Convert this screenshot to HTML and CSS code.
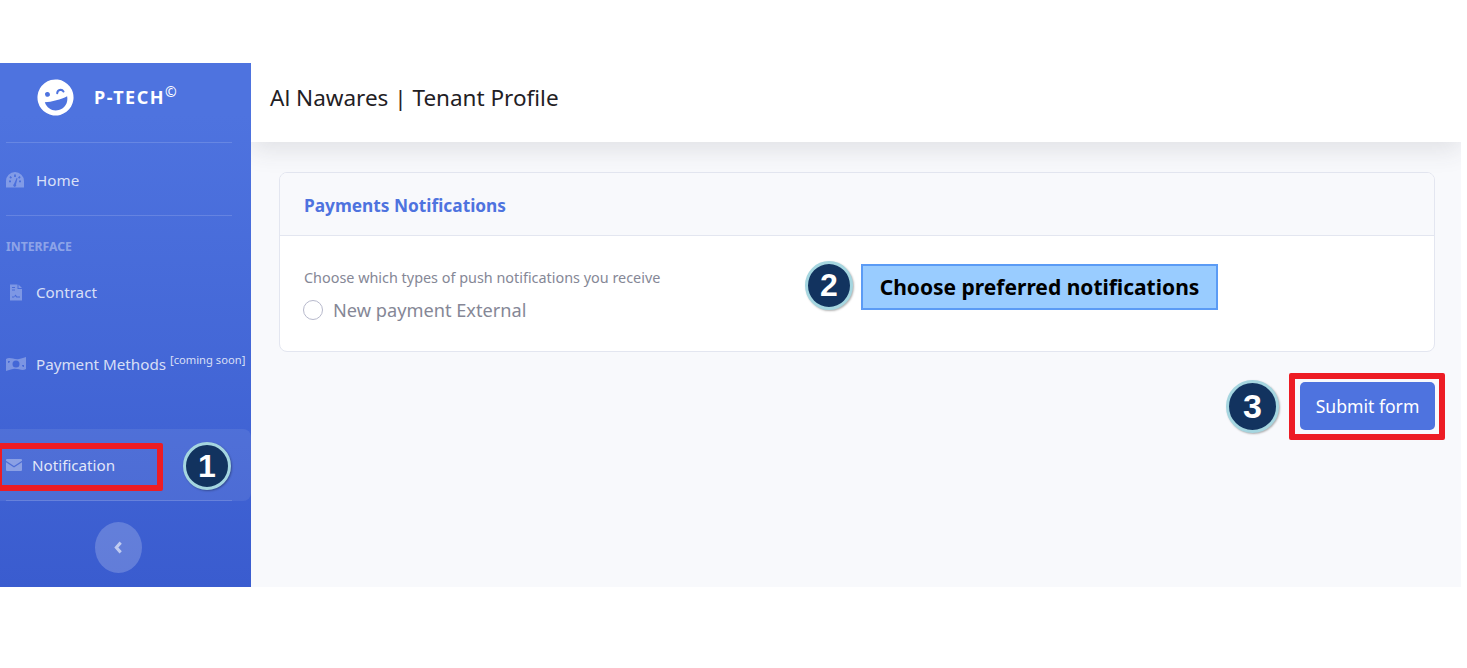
FILE: index.html
```html
<!DOCTYPE html>
<html lang="en">
<head>
  <meta charset="UTF-8">
  <title>Al Nawares | Tenant Profile</title>
  <link rel="stylesheet" href="styles.css">
</head>
<body>
  <div class="wrapper">
    <!-- sidebar -->
    <ul class="sidebar">
      <li class="brand">
        <svg class="brand-icon" viewBox="0 0 40 40">
          <g transform="rotate(-15 20 20)">
            <circle cx="20" cy="20" r="19.500" fill="#fff"/>
            <circle cx="12.500" cy="14.500" r="2.600" fill="#4e73df"/>
            <path d="M23 16c1-3.500 6-3.500 7 0" fill="none" stroke="#4e73df" stroke-width="2.200" stroke-linecap="round"/>
            <path d="M7.500 22c7 1.600 18 1.600 25 0-.6 7.500-6 12-12.500 12S8.100 29.500 7.500 22z" fill="#4e73df"/>
          </g>
        </svg>
        <span class="brand-text">P-TECH<sup>©</sup></span>
      </li>
      <li class="divider"></li>
      <li class="nav-item nav-home">
        <svg class="nav-icon" viewBox="0 0 18 16"><path d="M9 0a9 9 0 0 0-9 9v6.500h18V9a9 9 0 0 0-9-9zm-.9 2.500h1.800v2.600H8.100zM3 8.500h2v1.800H3zm10 0h2v1.800h-2zM4.500 4l1.500 1.500-1.200 1.200-1.500-1.500zm9 0 1.200 1.200-1.500 1.500L12 5.500zM8 12l2.600-6 .9.300L10 12.500a1.500 1.500 0 1 1-2-.5z" fill-rule="evenodd"/></svg>
        <span>Home</span>
      </li>
      <li class="divider"></li>
      <li class="heading">INTERFACE</li>
      <li class="nav-item nav-contract">
        <svg class="nav-icon nav-icon-file" viewBox="0 0 12 16"><path d="M0 0h7.500v4.500H12V16H0zM8.500 0 12 3.500H8.500zM2 2.500v1h3v-1zm0 2.500v1h3V5zm0 8h2l1-1.500L6.500 13H10v-1H7l-1.500-2L4 12H2z" fill-rule="evenodd"/></svg>
        <span>Contract</span>
      </li>
      <li class="nav-item nav-payment">
        <svg class="nav-icon nav-icon-money" viewBox="0 0 20 14"><path d="M0 2c4-2.500 8 1 13 0 3-.6 5-1.500 7-2v12c-4 2.500-8-1-13 0-3 .6-5 1.500-7 2zm10 1.500a3.500 3.500 0 1 0 0 7 3.500 3.500 0 0 0 0-7zM2 4v2a2 2 0 0 0 2-2zm14 4a2 2 0 0 0 2 2V8z" fill-rule="evenodd"/></svg>
        <span>Payment Methods <sup class="soon">[coming soon]</sup></span>
      </li>
      <li class="nav-item nav-active">
        <svg class="nav-icon nav-icon-mail" viewBox="0 0 16 12"><path d="M1 0h14a1 1 0 0 1 1 1v.8L8 7 0 1.800V1a1 1 0 0 1 1-1zM0 3.300 8 8.500l8-5.200V11a1 1 0 0 1-1 1H1a1 1 0 0 1-1-1z"/></svg>
        <span>Notification</span>
      </li>
      <li class="divider divider-last"></li>
      <li class="toggle-row">
        <button class="toggle-btn">
          <svg viewBox="0 0 8 12" width="9" height="13"><path d="M6 1.500 2 6l4 4.500" fill="none" stroke="currentColor" stroke-width="2.800"/></svg>
        </button>
      </li>
    </ul>

    <!-- content -->
    <div class="main">
      <div class="topbar">Al Nawares | Tenant Profile</div>
      <div class="container">
        <div class="card">
          <div class="card-header">Payments Notifications</div>
          <div class="card-body">
            <div class="hint">Choose which types of push notifications you receive</div>
            <label class="check-row">
              <span class="check-box"></span>
              <span>New payment External</span>
            </label>
          </div>
        </div>
        <div class="form-actions">
          <button class="submit-btn">Submit form</button>
        </div>
      </div>
    </div>
  </div>

  <!-- annotations drawn over the page -->
  <div class="red-frame frame-notification"></div>
  <div class="red-frame frame-submit"></div>
  <div class="step step-1">1</div>
  <div class="step step-2">2</div>
  <div class="step step-3">3</div>
  <div class="callout">Choose preferred notifications</div>
</body>
</html>
```

FILE: styles.css
```css
:root {
  --primary: #4e73df;
  --bg-light: #f8f9fc;
  --border: #e3e6f0;
  --text-gray: #858796;
  --red: #ed1c24;
  --step-navy: #12335f;
  --step-ring: #a5d6e0;
}

* {
  box-sizing: border-box;
}

body {
  margin: 0;
  height: 668px;
  overflow: hidden;
  position: relative;
  background: #fff;
  font-family: "Noto Sans", "Open Sans", sans-serif;
}

.wrapper {
  display: flex;
  width: 1461px;
  height: 524px;
  margin-top: 63px;
}

/* sidebar */
.sidebar {
  width: 251px;
  flex-shrink: 0;
  margin: 0;
  padding: 0;
  list-style: none;
  background: linear-gradient(180deg, #4e73df 10%, #3a5ccf 100%);
  color: #fff;
}

.brand {
  height: 79px;
  display: flex;
  align-items: center;
  padding: 0 0 11px 37px;
}

.brand-icon {
  width: 37px;
  height: 39px;
}

.brand-text {
  margin-left: 20px;
  font-weight: 700;
  font-size: 18px;
  letter-spacing: 1.500px;
  line-height: 1;
}

.brand-text sup {
  font-size: 14px;
  font-weight: 400;
  letter-spacing: 0;
  vertical-align: 7px;
  line-height: 0;
}

.divider {
  height: 1px;
  margin: 0 19px 0 6px;
  background: rgba(255, 255, 255, 0.15);
}

.divider-last {
  margin-top: -1px;
  position: relative;
}

.nav-item {
  display: flex;
  align-items: center;
  color: rgba(255, 255, 255, 0.8);
  font-size: 15.200px;
  padding-left: 6px;
}

.nav-item > span {
  margin-left: 12px;
}

.nav-icon {
  width: 18px;
  height: 16px;
  flex-shrink: 0;
  fill: rgba(255, 255, 255, 0.3);
}

.nav-home {
  height: 72px;
  padding-top: 2px;
}

.heading {
  padding: 23px 0 0 6px;
  height: 41px;
  font-size: 12.200px;
  line-height: 16px;
  font-weight: 700;
  color: rgba(255, 255, 255, 0.4);
}

.nav-contract {
  height: 72px;
  padding-bottom: 2px;
}

.nav-icon-file {
  width: 12px;
  height: 17px;
  margin: 0 3px 0 4px;
}

.nav-contract > span {
  margin-left: 11px;
}

.nav-payment {
  height: 100px;
  display: block;
  padding-top: 20px;
  line-height: 30px;
}

.nav-payment > span {
  margin-left: 6px;
}

.nav-icon-money {
  width: 20px;
  height: 14px;
  vertical-align: -1px;
}

.soon {
  font-size: 11.200px;
  line-height: 0;
}

.nav-active {
  height: 72px;
  background: rgba(255, 255, 255, 0.08);
  border-radius: 0 8px 8px 0;
  color: rgba(255, 255, 255, 0.85);
}

.nav-icon-mail {
  width: 16px;
  height: 12px;
  fill: rgba(255, 255, 255, 0.35);
}

.nav-active > span {
  margin-left: 10px;
}

.toggle-row {
  display: flex;
  justify-content: center;
  padding: 21px 15px 0 0;
}

.toggle-btn {
  width: 47px;
  height: 51px;
  padding: 0;
  border: none;
  border-radius: 50%;
  background: rgba(255, 255, 255, 0.2);
  color: rgba(255, 255, 255, 0.6);
  display: flex;
  align-items: center;
  justify-content: center;
}

/* content */
.main {
  flex: 1;
  display: flex;
  flex-direction: column;
  overflow: hidden;
  background: var(--bg-light);
}

.topbar {
  height: 79px;
  flex-shrink: 0;
  display: flex;
  align-items: center;
  padding: 0 0 11px 19px;
  background: #fff;
  color: #1f2024;
  font-size: 22.500px;
  box-shadow: 0 8px 24px rgba(58, 59, 69, 0.12);
  position: relative;
}

.container {
  padding: 30px 26px 0 28px;
}

.card {
  height: 180px;
  border: 1px solid var(--border);
  border-radius: 8px;
  background: #fff;
  overflow: hidden;
}

.card-header {
  height: 63px;
  display: flex;
  align-items: center;
  padding: 2px 0 0 24px;
  background: var(--bg-light);
  border-bottom: 1px solid var(--border);
  color: var(--primary);
  font-size: 17.300px;
  font-weight: 700;
}

.card-body {
  padding: 32px 24px 0 23px;
  color: var(--text-gray);
}

.hint {
  font-size: 14.400px;
  line-height: 20px;
  padding-left: 1px;
}

.check-row {
  display: flex;
  align-items: center;
  gap: 10px;
  margin-top: 9px;
  font-size: 18.200px;
  line-height: 26px;
}

.check-box {
  width: 20px;
  height: 20px;
  border: 1px solid #b7b9cc;
  border-radius: 50%;
  background: #fff;
}

.form-actions {
  display: flex;
  justify-content: flex-end;
  margin-top: 30px;
}

.submit-btn {
  width: 135px;
  height: 48px;
  border: none;
  border-radius: 5px;
  background: var(--primary);
  color: #fff;
  font-family: inherit;
  font-size: 17.600px;
}

/* annotations */
.red-frame {
  position: absolute;
  border: 6px solid var(--red);
  border-radius: 2px;
}

.frame-notification {
  left: -4px;
  top: 443px;
  width: 167px;
  height: 48px;
}

.frame-submit {
  left: 1289px;
  top: 373px;
  width: 156px;
  height: 67px;
}

.step {
  position: absolute;
  display: flex;
  align-items: center;
  justify-content: center;
  border: 3px solid var(--step-ring);
  border-radius: 50%;
  background: var(--step-navy);
  color: #fff;
  font-family: "Liberation Sans", sans-serif;
  font-weight: 700;
  box-shadow: 1px 1px 2px rgba(0, 0, 0, 0.3);
}

.step-1 {
  left: 183px;
  top: 442px;
  width: 48px;
  height: 48px;
  font-size: 32px;
}

.step-2 {
  left: 805px;
  top: 261px;
  width: 48px;
  height: 49px;
  font-size: 32px;
}

.step-3 {
  left: 1226px;
  top: 380px;
  width: 53px;
  height: 53px;
  font-size: 34px;
}

.callout {
  position: absolute;
  left: 861px;
  top: 264px;
  width: 357px;
  height: 46px;
  display: flex;
  align-items: center;
  justify-content: center;
  background: #99ccff;
  border: 2px solid #5b9bf5;
  color: #000;
  font-family: "Noto Sans", sans-serif;
  font-weight: 700;
  font-size: 21px;
}
```
